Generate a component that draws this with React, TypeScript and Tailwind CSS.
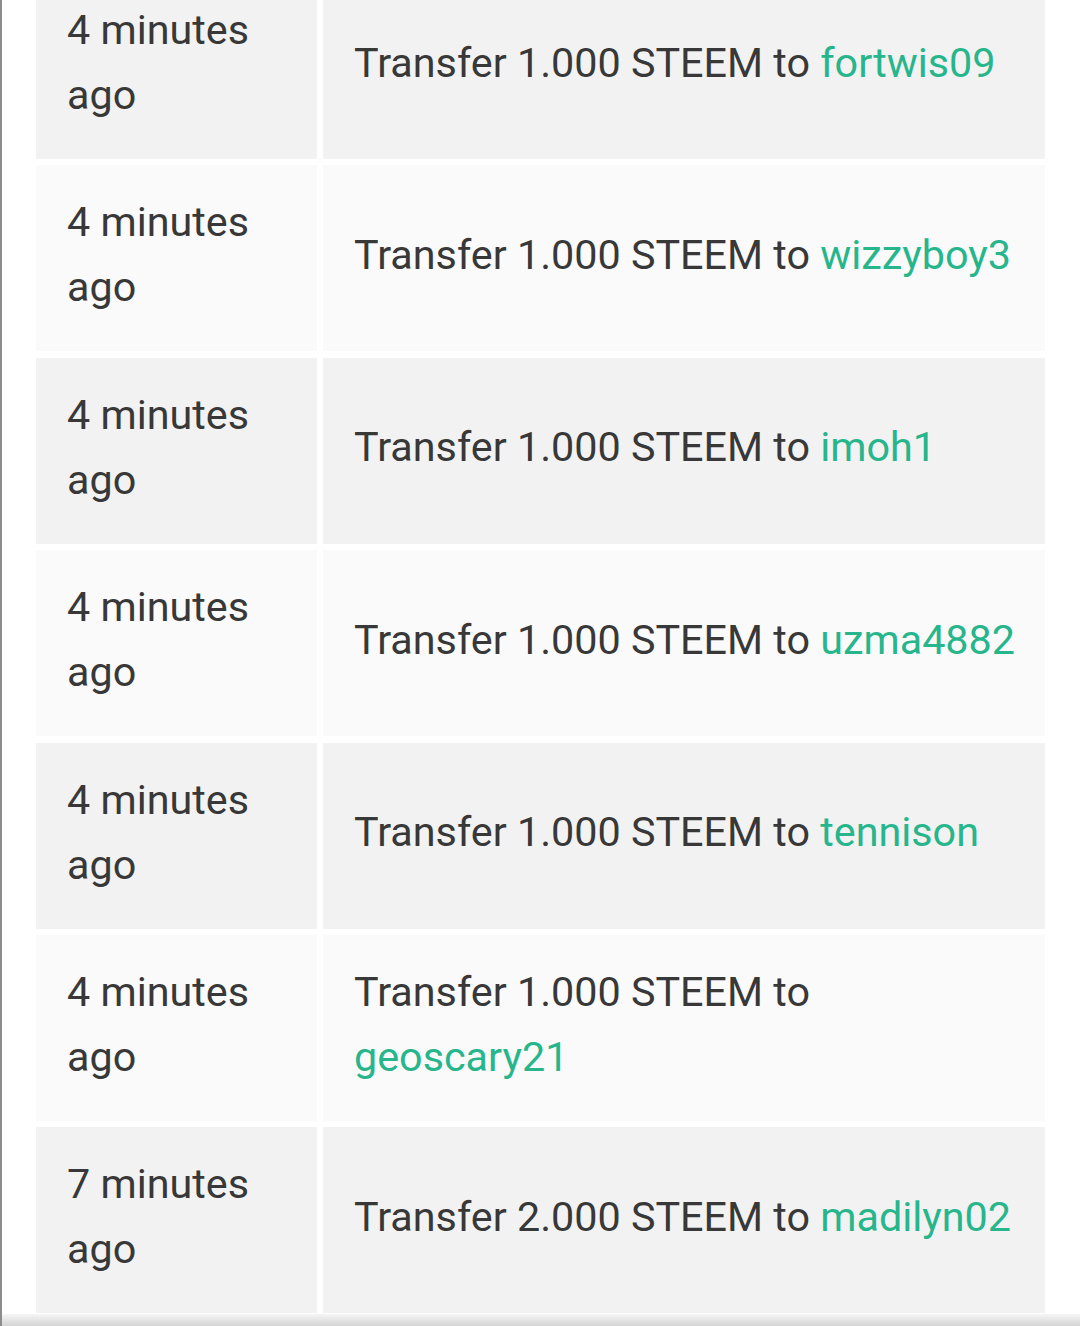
import React from "react";

type Transfer = {
  age: string;
  amount: string;
  to: string;
};

const transfers: Transfer[] = [
  { age: "4 minutes ago", amount: "1.000", to: "fortwis09" },
  { age: "4 minutes ago", amount: "1.000", to: "wizzyboy3" },
  { age: "4 minutes ago", amount: "1.000", to: "imoh1" },
  { age: "4 minutes ago", amount: "1.000", to: "uzma4882" },
  { age: "4 minutes ago", amount: "1.000", to: "tennison" },
  { age: "4 minutes ago", amount: "1.000", to: "geoscary21" },
  { age: "7 minutes ago", amount: "2.000", to: "madilyn02" },
];

export default function App() {
  return (
    <div
      className="h-[1326px] w-[1080px] flex flex-col bg-white overflow-hidden border-l-2 border-[#8c8c8c]"
      style={{ fontFamily: "Roboto, 'Liberation Sans', sans-serif" }}
    >
      {/* Transfers table, scrolled so the first row is cut off */}
      <div className="h-[1314px] overflow-hidden pl-[34px] pr-[35px]">
        <div className="mt-[-27px] grid grid-cols-[281px_722px] gap-x-[6px] gap-y-[6.4px] text-[41.3px] leading-[65px] text-[#383838]">
          {transfers.map((t, i) => {
            const bg = i % 2 === 0 ? "bg-[#f2f2f2]" : "bg-[#fafafa]";
            return (
              <React.Fragment key={t.to}>
                <div className={`${bg} pt-[25px] pb-[31px] pl-[31px] pr-[20px]`}>{t.age}</div>
                <div className={`${bg} pt-[25px] pb-[31px] pl-[31px] pr-[23px] flex items-center`}>
                  <span>
                    Transfer {t.amount} STEEM to <a className="text-[#27b68c]">{t.to}</a>
                  </span>
                </div>
              </React.Fragment>
            );
          })}
        </div>
      </div>

      {/* bottom edge */}
      <div className="h-[12px] bg-gradient-to-b from-[#f6f6f6] to-[#d4d4d4]" />
    </div>
  );
}
